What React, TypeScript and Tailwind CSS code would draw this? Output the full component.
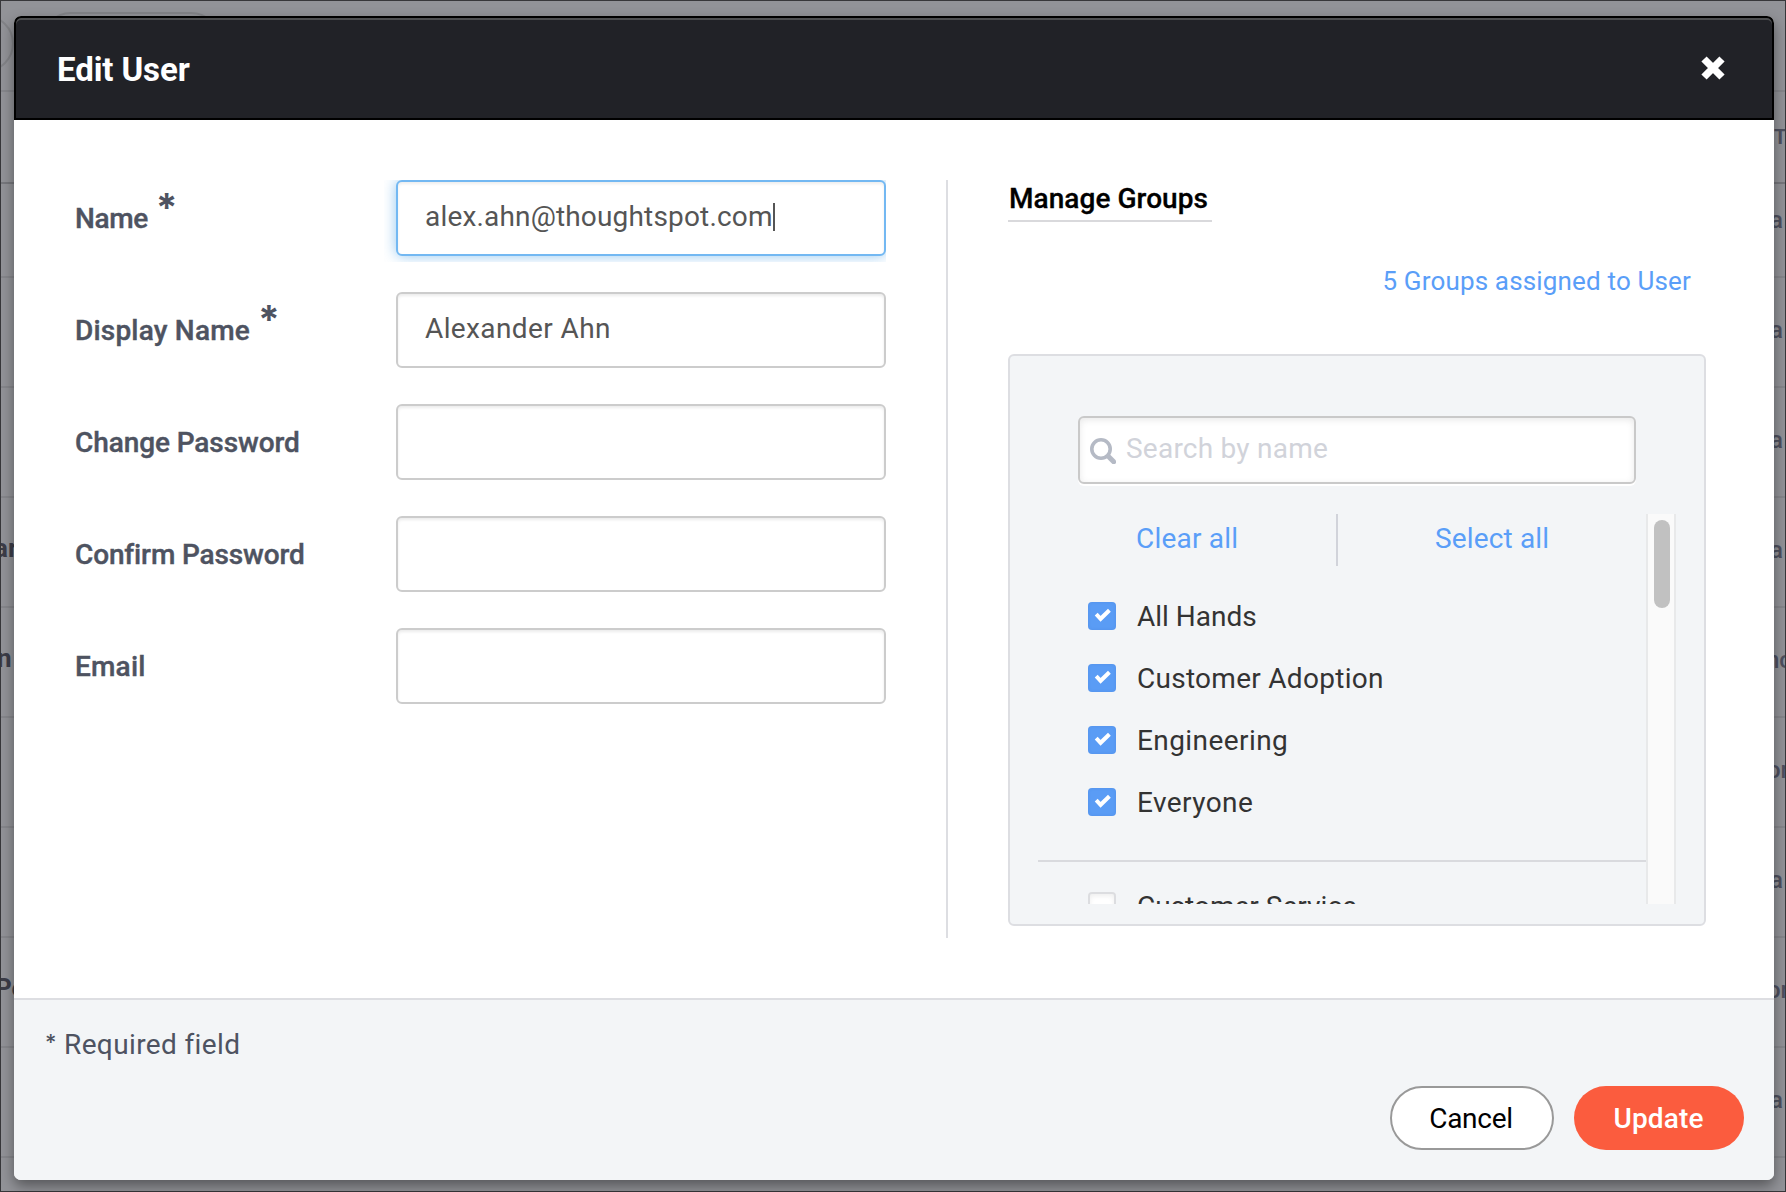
import type { ReactNode } from "react";

type Fragment = { text: string; shift?: string };

const leftRows: Fragment[] = [
  { text: "" },
  { text: "" },
  { text: "" },
  { text: "ar", shift: "-ml-[7px]" },
  { text: "n", shift: "-ml-[4px]" },
  { text: "" },
  { text: "" },
  { text: "Pe", shift: "-ml-[6px]" },
  { text: "" },
];

const rightRows: Fragment[] = [
  { text: "a", shift: "-ml-[2px]" },
  { text: "a", shift: "-ml-[2px]" },
  { text: "a", shift: "-ml-[2px]" },
  { text: "a", shift: "-ml-[2px]" },
  { text: "nc", shift: "-ml-[6px]" },
  { text: "or", shift: "-ml-[5px]" },
  { text: "a", shift: "-ml-[2px]" },
  { text: "or", shift: "-ml-[5px]" },
  { text: "a", shift: "-ml-[2px]" },
];

function Gutter({ rows, side }: { rows: Fragment[]; side: "left" | "right" }) {
  const left = side === "left";
  return (
    <div className={`h-full shrink-0 overflow-hidden ${left ? "w-[14px]" : "w-[13px]"}`}>
      <div className="h-[89px] pt-[14px]">
        {left && <div className="-ml-[44px] size-[57px] rounded-full border-2 border-[#838488]" />}
      </div>
      <div className="h-[94px] border-t-2 border-b-2 border-t-[#86878c] border-b-[#77787d] pt-[33px] pl-[2px] text-[20px] leading-[24px] font-bold text-[#4e505f]">
        {left ? "" : "T"}
      </div>
      {rows.map((row, i) => (
        <div
          key={i}
          className={`flex items-end border-b-2 border-[#86878c] leading-none whitespace-nowrap ${
            i === 0 ? "h-[94px]" : "h-[110px]"
          } ${
            left ? "pb-[45px] text-[26px] font-bold text-[#3c3d48]" : "pb-[44px] text-[24px] font-medium text-[#4e505f]"
          }`}
        >
          <span className={row.shift}>{row.text}</span>
        </div>
      ))}
    </div>
  );
}

function Backdrop() {
  return (
    <div className="absolute inset-0 flex justify-between overflow-hidden border border-[#37373a] bg-[#929398]">
      <Gutter rows={leftRows} side="left" />
      <div className="absolute top-[11px] left-[40px] h-[60px] w-[180px] rounded-full border-2 border-[#838488]" />
      <Gutter rows={rightRows} side="right" />
    </div>
  );
}

function Asterisk() {
  return <span className="-mt-[23px] ml-[8px] font-['Inter'] text-[39px] leading-none font-bold">*</span>;
}

function Field({ label, required, tracking, children, focused }: {
  label: string;
  required?: boolean;
  tracking: string;
  children?: ReactNode;
  focused?: boolean;
}) {
  return (
    <div className="flex h-[76px] items-center">
      <div className="flex h-[36px] w-[321px] shrink-0 items-center pt-[2px] text-[#4e5361]">
        <span className={`font-medium [-webkit-text-stroke:0.4px_#4e5361] ${tracking}`}>{label}</span>
        {required && <Asterisk />}
      </div>
      <div
        className={`flex h-full w-[490px] items-center rounded-[6px] border-2 bg-white pb-[3px] pl-[27px] text-[#555] ${
          focused
            ? "border-[#73b8f2] shadow-[inset_0_2px_3px_rgba(0,0,0,0.07),0_0_14px_rgba(102,175,233,0.7)] [clip-path:inset(0_0_-6px_-12px)]"
            : "border-[#ccc] shadow-[inset_0_2px_3px_rgba(0,0,0,0.08)]"
        }`}
      >
        {children}
      </div>
    </div>
  );
}

function Checkbox({ checked }: { checked?: boolean }) {
  if (!checked) {
    return (
      <span className="size-[28px] rounded-[4px] border-2 border-[#dcdde0] bg-white shadow-[inset_0_2px_5px_rgba(0,0,0,0.07)]" />
    );
  }
  return (
    <span className="size-[28px] rounded-[4px] bg-[#5a9cf5] shadow-[inset_0_0_3px_rgba(60,110,200,0.25)]">
      <svg viewBox="0 0 28 28" className="size-[28px]" fill="none" stroke="#fff" strokeWidth="4">
        <path d="M8.2 12.2 L12.6 16.8 L21.4 8.2" />
      </svg>
    </span>
  );
}

function GroupRow({ name, checked, tracking }: { name: string; checked?: boolean; tracking: string }) {
  return (
    <div className="flex h-[62px] shrink-0 items-center gap-[21px] pl-[50px] text-[#333]">
      <Checkbox checked={checked} />
      <span className={`pt-[2px] ${tracking}`}>{name}</span>
    </div>
  );
}

function GroupsPanel() {
  return (
    <div className="mt-[56px] h-[572px] rounded-[6px] border-2 border-[#dddee2] bg-[#f3f5f7] pt-[60px]">
      <div className="mx-[68px] flex h-[68px] items-center rounded-[6px] border-2 border-[#c9c9c9] bg-white pb-[3px] pl-[10px] shadow-[inset_0_2px_7px_rgba(0,0,0,0.09),0_2px_0_#fff]">
        <svg viewBox="0 0 26 26" className="mt-[4px] size-[26px]" fill="none" stroke="#b5bac5">
          <circle cx="11" cy="11" r="9.2" strokeWidth="3.6" />
          <path d="M17 17 L25.5 25.5" strokeWidth="5" />
        </svg>
        <span className="ml-[10px] tracking-[0.23px] text-[#d1d3da]">Search by name</span>
      </div>
      <div className="mx-[28px] mt-[30px] flex h-[390px]">
        <div className="flex flex-1 flex-col overflow-hidden">
          <div className="flex h-[52px] shrink-0 text-[#5a9ef8]">
            <div className="flex w-[298px] items-center pb-[3px] pl-[98px] tracking-[0.2px]">Clear all</div>
            <div className="w-[2px] bg-[#d1d3da]" />
            <div className="flex items-center pb-[3px] pl-[97px] tracking-[0.15px]">Select all</div>
          </div>
          <div className="mt-[19px]">
            <GroupRow name="All Hands" checked tracking="tracking-normal" />
            <GroupRow name="Customer Adoption" checked tracking="tracking-[0.28px]" />
            <GroupRow name="Engineering" checked tracking="tracking-[0.42px]" />
            <GroupRow name="Everyone" checked tracking="tracking-[0.42px]" />
          </div>
          <div className="mt-[27px] mb-[13px] h-[2px] shrink-0 bg-[#d9dade]" />
          <GroupRow name="Customer Service" tracking="tracking-normal" />
        </div>
        <div className="w-[30px] border-x-2 border-[#e8e9ea] bg-[#fafafa] pt-[6px] pl-[6px]">
          <div className="h-[88px] w-[16px] rounded-full bg-[#c1c1c1]" />
        </div>
      </div>
    </div>
  );
}

function CloseIcon() {
  return (
    <svg viewBox="0 0 24 24" className="-mt-[3px] size-[24px]" fill="none" stroke="#fff" strokeWidth="7.4">
      <path d="M3 3 L21 21 M21 3 L3 21" />
    </svg>
  );
}

export default function App() {
  return (
    <div className="relative h-[1192px] w-[1786px] overflow-hidden font-['Roboto',sans-serif] text-[28px] leading-[34px]">
      <Backdrop />
      <div className="relative mt-[16px] ml-[14px] flex h-[1164px] w-[1760px] flex-col rounded-[7px] bg-white shadow-[0_6px_14px_rgba(0,0,0,0.42)]">
        <header className="flex h-[104px] shrink-0 items-center justify-between rounded-t-[7px] border-2 border-black bg-[#212227] pt-[3px] pr-[47px] pl-[41px] shadow-[inset_0_2px_0_#4d4e50]">
          <h1 className="text-[33px] font-bold tracking-[-0.1px] text-white">Edit User</h1>
          <CloseIcon />
        </header>

        <main className="flex flex-1 pt-[60px] pl-[61px]">
          <form className="flex w-[811px] flex-col gap-[36px]">
            <Field label="Name" required focused tracking="tracking-[-0.4px]">
              <span className="tracking-[0.17px]">alex.ahn@thoughtspot.com</span>
              <span className="h-[28px] w-[2px] bg-[#555]" />
            </Field>
            <Field label="Display Name" required tracking="tracking-[0.2px]">
              <span className="tracking-[0.39px]">Alexander Ahn</span>
            </Field>
            <Field label="Change Password" tracking="tracking-[-0.09px]" />
            <Field label="Confirm Password" tracking="tracking-[-0.13px]" />
            <Field label="Email" tracking="tracking-[0.2px]" />
          </form>

          <div className="ml-[60px] h-[758px] w-[2px] bg-[#dddee2]" />

          <section className="ml-[60px] w-[698px]">
            <div className="flex">
              <h2 className="h-[42px] w-[204px] border-b-2 border-[#d9d9dc] pt-[2px] pl-px font-medium tracking-[0.05px] whitespace-nowrap text-black [-webkit-text-stroke:0.3px_#000]">
                Manage Groups
              </h2>
            </div>
            <div className="mt-[42px] flex h-[34px] items-center justify-end pr-[15px] text-[26px] tracking-[0.16px] text-[#5a9ef8]">
              5 Groups assigned to User
            </div>
            <GroupsPanel />
          </section>
        </main>

        <footer className="h-[182px] shrink-0 rounded-b-[7px] border-t-2 border-[#dddee2] bg-[#f3f5f7] pt-[28px] pr-[30px] pl-[31px]">
          <p className="flex text-[#4e5361]">
            <span className="w-[19px] font-['Inter'] text-[22px] leading-[29px] font-medium">*</span>
            <span className="tracking-[0.38px]">Required field</span>
          </p>
          <div className="mt-[24px] flex justify-end gap-[20px]">
            <button className="h-[64px] w-[164px] rounded-full border-2 border-[#999] bg-white pt-[2px] pr-[2px] tracking-[-0.28px] text-black">
              Cancel
            </button>
            <button className="h-[64px] w-[170px] rounded-full bg-[#fb5c3e] pt-[2px] pr-px font-medium tracking-[0.15px] text-white">
              Update
            </button>
          </div>
        </footer>
      </div>
    </div>
  );
}
